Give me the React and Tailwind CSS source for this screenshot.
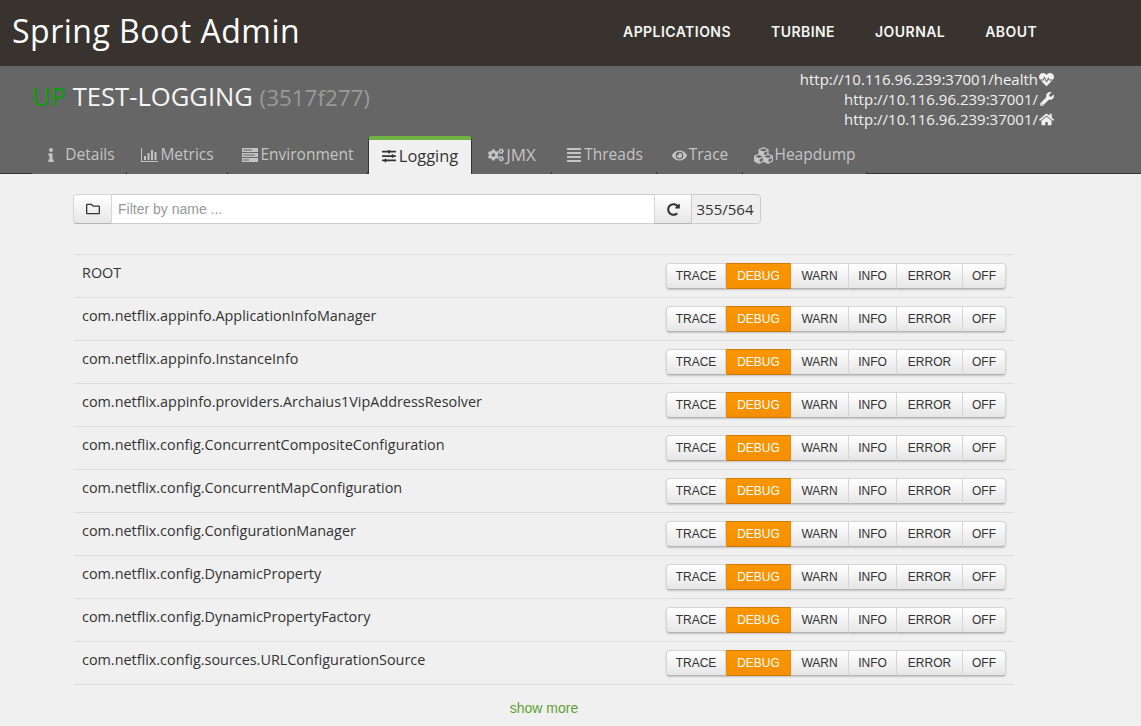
import React from 'react';
import {
    FaInfo, FaSlidersH, FaCogs, FaAlignJustify, FaEye, FaCubes,
    FaHeartbeat, FaWrench, FaHome, FaRegFolder, FaRedoAlt,
} from 'react-icons/fa';

const navItems = ['APPLICATIONS', 'TURBINE', 'JOURNAL', 'ABOUT'];

// bar chart with a thin axis, the package one has outlined bars
const BarChartIcon = () => (
    <svg width="17" height="14" viewBox="0 0 17 14" fill="currentColor" className="mr-[2px]">
        <path d="M0 0h1v13h16v1H0z" />
        <path d="M3 8h2v4H3zM6.5 5h2v7h-2zM10 2h2v10h-2zM13.5 4h2v8h-2z" />
    </svg>
);

const TasksIcon = () => (
    <svg width="16" height="14" viewBox="0 0 16 14" fill="currentColor" className="mr-[2px]">
        <path d="M0 0h16v4H0zM1 1.5v1h9v-1zM0 5h16v4H0zM1 6.5v1h12v-1zM0 10h16v4H0zM1 11.5v1h6v-1z" fillRule="evenodd" />
    </svg>
);

const tabs = [
    { label: 'Details', icon: <FaInfo className="text-[14px] mr-[7px]" />, width: 'w-[95px]' },
    { label: 'Metrics', icon: <BarChartIcon />, width: 'w-[101px]' },
    { label: 'Environment', icon: <TasksIcon />, width: 'w-[140px]' },
    { label: 'Logging', icon: <FaSlidersH className="text-[14px] mr-[3px]" />, width: 'w-[104px]', active: true, text: 'text-[16.4px]' },
    { label: 'JMX', icon: <FaCogs className="text-[16px] mr-[2px]" />, width: 'w-[80px]', text: 'text-[17px]' },
    { label: 'Threads', icon: <FaAlignJustify className="text-[16px] mr-[2px]" />, width: 'w-[105px]' },
    { label: 'Trace', icon: <FaEye className="text-[15px] mr-[2px]" />, width: 'w-[86px]' },
    { label: 'Heapdump', icon: <FaCubes className="text-[19px] mr-[1px]" />, width: 'w-[124px]' },
];

const links = [
    { url: 'http://10.116.96.239:37001/health', icon: <FaHeartbeat className="text-[15px]" /> },
    { url: 'http://10.116.96.239:37001/', icon: <FaWrench className="text-[14px]" /> },
    { url: 'http://10.116.96.239:37001/', icon: <FaHome className="text-[15px]" /> },
];

const levels = [
    { name: 'TRACE', width: 'w-[60px]' },
    { name: 'DEBUG', width: 'w-[65px]', active: true },
    { name: 'WARN', width: 'w-[58px]' },
    { name: 'INFO', width: 'w-[48px]' },
    { name: 'ERROR', width: 'w-[66px]' },
    { name: 'OFF', width: 'w-[43px]' },
];

const loggers = [
    'ROOT',
    'com.netflix.appinfo.ApplicationInfoManager',
    'com.netflix.appinfo.InstanceInfo',
    'com.netflix.appinfo.providers.Archaius1VipAddressResolver',
    'com.netflix.config.ConcurrentCompositeConfiguration',
    'com.netflix.config.ConcurrentMapConfiguration',
    'com.netflix.config.ConfigurationManager',
    'com.netflix.config.DynamicProperty',
    'com.netflix.config.DynamicPropertyFactory',
    'com.netflix.config.sources.URLConfigurationSource',
];

const LevelButtons = () => (
    <div className="flex h-[26px] rounded-[4px] shadow-[0_1px_2px_rgba(0,0,0,0.2)]">
        {levels.map((level) => (
            <button
                key={level.name}
                className={level.active
                    ? `${level.width} text-[12px] text-[#fff] bg-gradient-to-b from-[#fb9602] to-[#f58f00] border border-[#f18a00] border-t-[#d17b00] border-b-[#c97500]`
                    : `${level.width} text-[12px] text-[#333] bg-gradient-to-b from-[#ffffff] to-[#e6e6e6] border border-l-0 border-[#d5d5d5] border-b-[#b3b3b3] first:border-l first:rounded-l-[4px] last:rounded-r-[4px]`}
            >
                {level.name}
            </button>
        ))}
    </div>
);

const App = () => {
    return (
        <div className="min-h-[726px] h-[726px] overflow-hidden bg-[#f0f0f0] font-['Liberation_Sans',sans-serif]">
            <header className="h-[66px] bg-[#38332f] flex items-center">
                <div className="pl-[12px] pb-[4px] w-[623px] text-[#fff] text-[32px] font-['Open_Sans',sans-serif] tracking-[0.5px] leading-none">
                    Spring Boot Admin
                </div>
                <nav className="flex gap-[40px] pb-[2px]">
                    {navItems.map((item) => (
                        <a key={item} className="text-[14px] tracking-[0.45px] text-[#f5f5f5] font-semibold font-['Inter',sans-serif] leading-none">
                            {item}
                        </a>
                    ))}
                </nav>
            </header>

            <section className="h-[108px] bg-[#666666] flex flex-col border-b border-[#333333]">
                <div className="h-[70px] flex justify-between pr-[87px]">
                    <h1 className="pl-[32px] pt-[15px] text-[25.6px] leading-[32px] text-[#f5f5f5] font-['Open_Sans',sans-serif]">
                        <span className="text-[#0b9f0b]">UP</span> TEST-LOGGING <small className="text-[22.4px] text-[#999999]">(3517f277)</small>
                    </h1>
                    <div className="pt-[3px] flex flex-col items-end text-[15px] leading-[20px] text-[#f0f0f0] font-['Open_Sans',sans-serif]">
                        {links.map((link, idx) => (
                            <div key={idx} className="flex items-center gap-[1px]">
                                <a>{link.url}</a>
                                <span className="w-[15px] flex justify-center">{link.icon}</span>
                            </div>
                        ))}
                    </div>
                </div>
                <nav className="h-[38px] -mb-px pl-[32px] flex font-['Open_Sans',sans-serif] text-[15.5px]">
                    {tabs.map((tab) => (
                        <a
                            key={tab.label}
                            className={tab.active
                                ? `${tab.width} ${tab.text} h-[38px] flex items-center justify-center pb-[2px] text-[#333333] bg-[#f0f0f0] border-x border-[#333333] border-t-[4px] border-t-[#6db33f] rounded-t-[4px]`
                                : `${tab.width} ${tab.text || ''} h-[38px] flex items-center justify-center text-[#c4c4c4] bg-[#666666] relative after:absolute after:right-0 after:bottom-0 after:w-px after:h-[2px] after:bg-[#333333]`}
                        >
                            {tab.icon}
                            {tab.label}
                        </a>
                    ))}
                </nav>
            </section>

            <main className="w-[940px] ml-[74px]">
                <div className="pt-[20px] -ml-px flex h-[50px] w-[688px] text-[14px]">
                    <button className="w-[39px] h-[30px] flex items-center justify-center rounded-l-[4px] border border-[#d5d5d5] border-b-[#b3b3b3] bg-gradient-to-b from-[#ffffff] to-[#e6e6e6] text-[#333333]">
                        <FaRegFolder className="text-[14px]" />
                    </button>
                    <input
                        placeholder="Filter by name ..."
                        className="flex-1 h-[30px] px-[6px] bg-white border-y border-[#cccccc] outline-none text-[14px] placeholder:text-[#999999]"
                    />
                    <button className="w-[38px] h-[30px] flex items-center justify-center border border-[#d5d5d5] border-b-[#b3b3b3] bg-gradient-to-b from-[#ffffff] to-[#e6e6e6] text-[#333333]">
                        <FaRedoAlt className="text-[13px]" />
                    </button>
                    <span className="w-[70px] h-[30px] flex items-center justify-center -ml-px pr-[2px] rounded-r-[4px] border border-[#cccccc] bg-[#eeeeee] text-[15px] text-[#333333] font-['Open_Sans',sans-serif]">
                        355/564
                    </span>
                </div>

                <div className="mt-[30px] border-b border-[#dddddd]">
                    {loggers.map((name) => (
                        <div key={name} className="h-[43px] border-t border-[#dddddd] flex justify-between pl-[8px] pr-[8px]">
                            <span className="pt-[8px] text-[14.4px] leading-[20px] text-[#333333] font-['Open_Sans',sans-serif]">{name}</span>
                            <div className="pt-[8px]">
                                <LevelButtons />
                            </div>
                        </div>
                    ))}
                </div>

                <div className="pt-[13px] text-center text-[14px] leading-[20px] text-[#5fa134]">
                    show more
                </div>
            </main>
        </div>
    );
};

export default App;
